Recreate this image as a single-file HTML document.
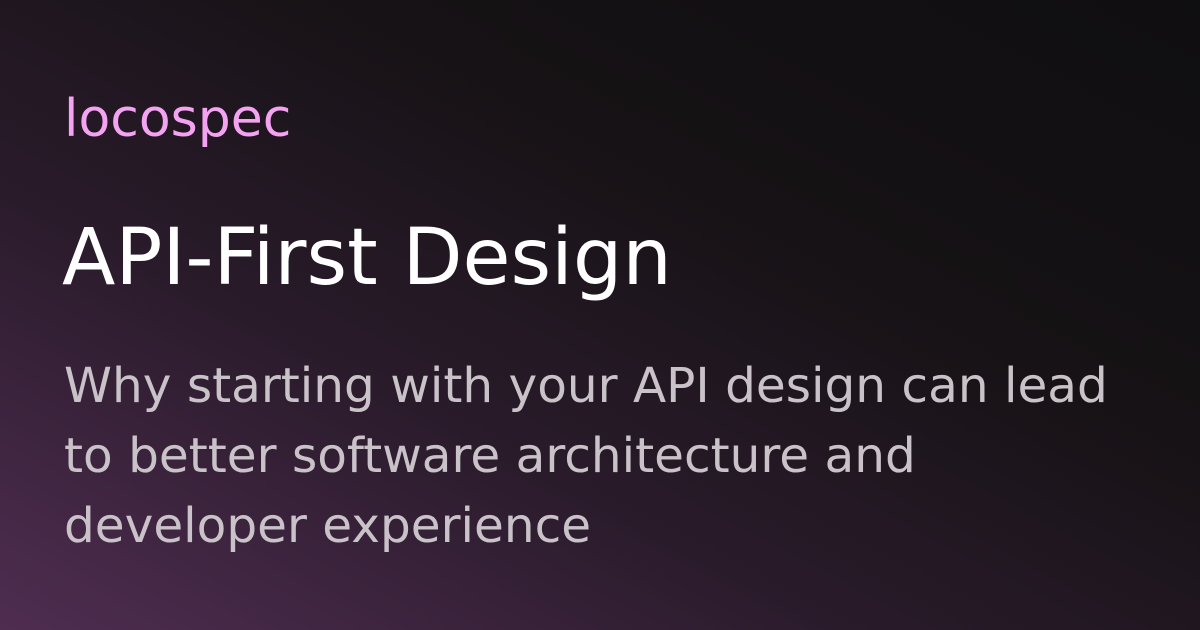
<!DOCTYPE html>
<html><head><meta charset="utf-8"><style>
html,body{margin:0;padding:0}
body{width:1200px;height:630px;overflow:hidden;position:relative;
background:linear-gradient(to top right,#4f2d51 0%,#2a1b2b 35%,#161215 65%,#0f0e10 100%);
font-family:"DejaVu Sans","Liberation Sans",sans-serif;}
.logo{position:absolute;left:64px;top:89px;font-size:52px;color:#f3a3f1;letter-spacing:0px;}
.title{position:absolute;left:62px;top:213px;font-size:78px;color:#fff;letter-spacing:0px;}
.sub{position:absolute;left:64px;top:351px;width:1130px;font-size:48.5px;line-height:70px;color:#c9c3c9;letter-spacing:0px;white-space:nowrap;}
</style></head><body>
<div class="logo">locospec</div>
<div class="title">API-First Design</div>
<div class="sub">Why starting with your API design can lead<br>to better software architecture and<br>developer experience</div>
</body></html>
